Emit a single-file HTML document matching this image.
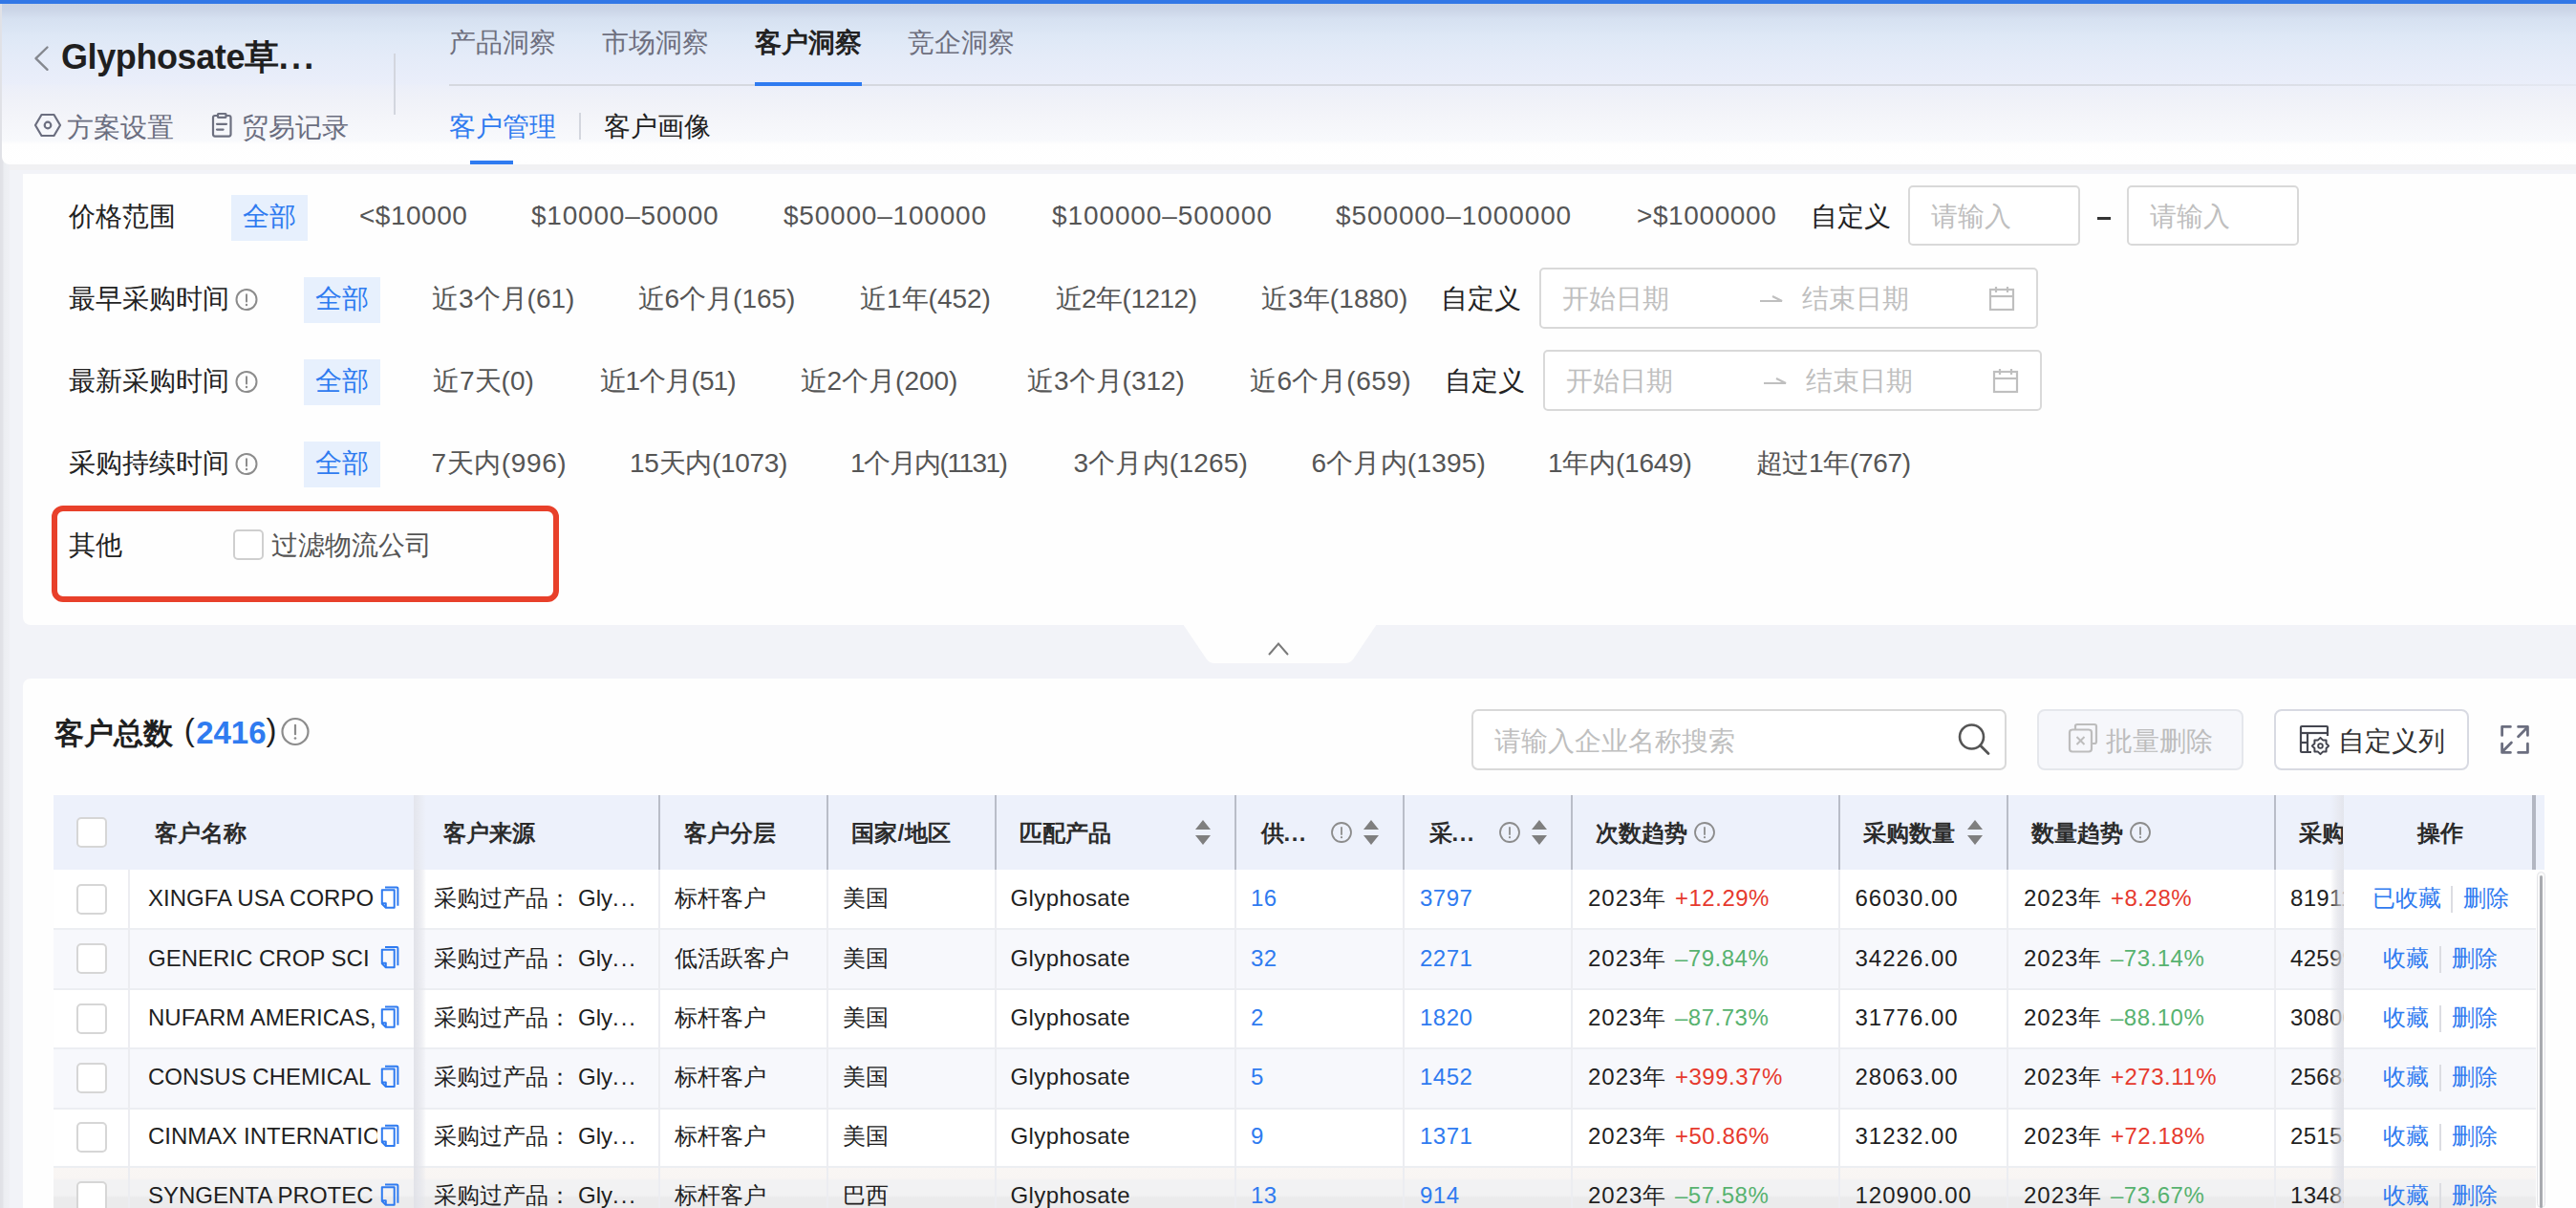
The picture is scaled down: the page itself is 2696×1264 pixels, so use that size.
<!DOCTYPE html><html><head><meta charset="utf-8"><style>
html,body{margin:0;padding:0;}
body{width:2696px;height:1264px;overflow:hidden;position:relative;background:#f2f3f8;font-family:"Liberation Sans",sans-serif;}
.t{position:absolute;line-height:40px;white-space:nowrap;}
.b{position:absolute;box-sizing:border-box;}
svg{position:absolute;overflow:visible;}
</style></head><body>
<div class="b" style="left:0px;top:0px;width:10px;height:1264px;background:linear-gradient(90deg,#e0e1e6 0px,#e2e3e8 3px,#eceef2 4px,#eff0f4 10px);"></div>
<div class="b" style="left:0px;top:0px;width:2696px;height:4px;background:#3277e6;"></div>
<div class="b" style="left:2px;top:4px;width:2694px;height:168px;background:linear-gradient(180deg,#c8d2e3 0px,#ccd6e8 7px,#d6e1f1 16px,#dee8f6 34px,#e4ebf8 54px,#eaeefa 84px,#eceff9 86px,#eff1f8 98px,#f3f4f9 116px,#f8f9fc 143px,#fefefe 147px,#ffffff 168px);border-bottom-left-radius:8px;"></div>
<div class="b" style="left:10px;top:172px;width:2686px;height:6px;background:#f1f1f3;"></div>
<svg style="left:0;top:0" width="100" height="100"><polyline points="49.5,49.5 37.5,61.2 49.5,72.8" fill="none" stroke="#85888f" stroke-width="2.4" stroke-linecap="round" stroke-linejoin="round"/></svg>
<div class="t" style="left:64px;top:40px;font-size:36px;color:#1f1f1f;font-weight:bold;letter-spacing:-0.4px;">Glyphosate草<span style="letter-spacing:3.3px">...</span></div>
<svg style="left:0;top:0" width="120" height="160"><polygon points="43.5,120 56.5,120 63,131 56.5,142 43.5,142 37,131" fill="none" stroke="#6b6e7f" stroke-width="2.2" stroke-linejoin="round"/><circle cx="50" cy="131" r="3.3" fill="none" stroke="#6b6e7f" stroke-width="2.2"/></svg>
<div class="t" style="left:70px;top:113.5px;font-size:28px;color:#6b6e80;">方案设置</div>
<svg style="left:0;top:0" width="300" height="160"><rect x="223" y="121" width="18.5" height="21.6" rx="2" fill="none" stroke="#6d7080" stroke-width="2.2"/><rect x="228" y="119" width="8.5" height="3.8" rx="0.5" fill="#f3f4f9" stroke="#6d7080" stroke-width="2.2"/><line x1="227" y1="129.8" x2="237" y2="129.8" stroke="#6d7080" stroke-width="2.2" stroke-linecap="round"/><line x1="227" y1="135.6" x2="233.6" y2="135.6" stroke="#6d7080" stroke-width="2.2" stroke-linecap="round"/></svg>
<div class="t" style="left:253px;top:113.5px;font-size:28px;color:#6b6e80;">贸易记录</div>
<div class="b" style="left:412px;top:56px;width:2px;height:64px;background:#d3d6de;"></div>
<div class="t" style="left:470px;top:24.7px;font-size:28px;color:#6e6f7e;">产品洞察</div>
<div class="t" style="left:630px;top:24.7px;font-size:28px;color:#6e6f7e;">市场洞察</div>
<div class="t" style="left:790px;top:24.7px;font-size:28px;color:#222222;font-weight:bold;">客户洞察</div>
<div class="t" style="left:950px;top:24.7px;font-size:28px;color:#6e6f7e;">竞企洞察</div>
<div class="b" style="left:470px;top:88px;width:2226px;height:2px;background:linear-gradient(90deg,#d5d8df 0px,#d5d8df 1700px,rgba(213,216,223,0.3) 2226px);"></div>
<div class="b" style="left:790px;top:86px;width:112px;height:4px;background:#2f7bf0;"></div>
<div class="t" style="left:470px;top:112.8px;font-size:28px;color:#2f7bf0;">客户管理</div>
<div class="b" style="left:606px;top:118px;width:2px;height:28px;background:#d3d6de;"></div>
<div class="t" style="left:632px;top:112.8px;font-size:28px;color:#1f1f1f;">客户画像</div>
<div class="b" style="left:492px;top:168px;width:45px;height:4px;background:#2f7bf0;"></div>
<div class="b" style="left:24px;top:182px;width:2672px;height:472px;background:#fefefe;border-radius:0 0 0 8px;"></div>
<div class="t" style="left:72px;top:206.75px;font-size:28px;color:#222222;">价格范围</div>
<div class="b" style="left:242px;top:204px;width:80px;height:48px;background:#e7f0fd;"></div>
<div class="t" style="left:254px;top:206.75px;font-size:28px;color:#2f7bf0;">全部</div>
<div class="t" style="left:376px;top:206.25px;font-size:28px;color:#555555;letter-spacing:0.5px;">&lt;$10000</div>
<div class="t" style="left:556px;top:206.25px;font-size:28px;color:#555555;letter-spacing:0.8px;">$10000–50000</div>
<div class="t" style="left:820px;top:206.25px;font-size:28px;color:#555555;letter-spacing:0.8px;">$50000–100000</div>
<div class="t" style="left:1101px;top:206.25px;font-size:28px;color:#555555;letter-spacing:0.9px;">$100000–500000</div>
<div class="t" style="left:1398px;top:206.25px;font-size:28px;color:#555555;letter-spacing:0.9px;">$500000–1000000</div>
<div class="t" style="left:1713px;top:206.25px;font-size:28px;color:#555555;letter-spacing:0.6px;">&gt;$1000000</div>
<div class="t" style="left:1894.5px;top:206.75px;font-size:28px;color:#222222;">自定义</div>
<div class="b" style="left:1997px;top:194px;width:180px;height:63px;border:2px solid #d9d9d9;border-radius:5px;background:#fff;"></div>
<div class="t" style="left:2021px;top:206.75px;font-size:28px;color:#bfbfbf;">请输入</div>
<div class="b" style="left:2195px;top:227px;width:14px;height:2.5px;background:#333;"></div>
<div class="b" style="left:2226px;top:194px;width:180px;height:63px;border:2px solid #d9d9d9;border-radius:5px;background:#fff;"></div>
<div class="t" style="left:2250px;top:206.75px;font-size:28px;color:#bfbfbf;">请输入</div>
<div class="t" style="left:72px;top:293.3px;font-size:28px;color:#222222;">最早采购时间</div>
<svg style="left:0;top:0" width="1" height="1"><circle cx="258" cy="313.5" r="10.5" fill="none" stroke="#8c8c8c" stroke-width="2"/><line x1="258" y1="308.25" x2="258" y2="315.6" stroke="#8c8c8c" stroke-width="2" stroke-linecap="round"/><circle cx="258" cy="318.96" r="1.2" fill="#8c8c8c"/></svg>
<div class="b" style="left:318px;top:290px;width:80px;height:48px;background:#e7f0fd;"></div>
<div class="t" style="left:330px;top:293.3px;font-size:28px;color:#2f7bf0;">全部</div>
<div class="t" style="left:452px;top:293.3px;font-size:28px;color:#555555;letter-spacing:0px;">近3个月(61)</div>
<div class="t" style="left:667.5px;top:293.3px;font-size:28px;color:#555555;letter-spacing:0px;">近6个月(165)</div>
<div class="t" style="left:900px;top:293.3px;font-size:28px;color:#555555;letter-spacing:0px;">近1年(452)</div>
<div class="t" style="left:1104.5px;top:293.3px;font-size:28px;color:#555555;letter-spacing:-0.5px;">近2年(1212)</div>
<div class="t" style="left:1320px;top:293.3px;font-size:28px;color:#555555;letter-spacing:0.1px;">近3年(1880)</div>
<div class="t" style="left:1507.5px;top:293.3px;font-size:28px;color:#222222;">自定义</div>
<div class="b" style="left:1611px;top:280px;width:522px;height:64px;border:2px solid #d9d9d9;border-radius:5px;background:#fff;"></div>
<div class="t" style="left:1635px;top:293.3px;font-size:28px;color:#bfbfbf;">开始日期</div>
<svg style="left:0;top:0" width="1" height="1"><polyline points="1842,315 1865,315 1855,310" fill="none" stroke="#bfbfbf" stroke-width="2.2" stroke-linejoin="miter"/></svg>
<div class="t" style="left:1886px;top:293.3px;font-size:28px;color:#bfbfbf;">结束日期</div>
<svg style="left:0;top:0" width="1" height="1"><rect x="2083" y="303" width="24" height="21" fill="none" stroke="#bfbfbf" stroke-width="2.2"/><line x1="2083" y1="310" x2="2107" y2="310" stroke="#bfbfbf" stroke-width="2.2"/><line x1="2089" y1="300" x2="2089" y2="306" stroke="#bfbfbf" stroke-width="2.2"/><line x1="2101" y1="300" x2="2101" y2="306" stroke="#bfbfbf" stroke-width="2.2"/></svg>
<div class="t" style="left:72px;top:379.3px;font-size:28px;color:#222222;">最新采购时间</div>
<svg style="left:0;top:0" width="1" height="1"><circle cx="258" cy="399.5" r="10.5" fill="none" stroke="#8c8c8c" stroke-width="2"/><line x1="258" y1="394.25" x2="258" y2="401.6" stroke="#8c8c8c" stroke-width="2" stroke-linecap="round"/><circle cx="258" cy="404.96" r="1.2" fill="#8c8c8c"/></svg>
<div class="b" style="left:318px;top:376px;width:80px;height:48px;background:#e7f0fd;"></div>
<div class="t" style="left:330px;top:379.3px;font-size:28px;color:#2f7bf0;">全部</div>
<div class="t" style="left:453px;top:379.3px;font-size:28px;color:#555555;letter-spacing:0px;">近7天(0)</div>
<div class="t" style="left:627.5px;top:379.3px;font-size:28px;color:#555555;letter-spacing:-0.9px;">近1个月(51)</div>
<div class="t" style="left:837.5px;top:379.3px;font-size:28px;color:#555555;letter-spacing:0px;">近2个月(200)</div>
<div class="t" style="left:1075px;top:379.3px;font-size:28px;color:#555555;letter-spacing:0px;">近3个月(312)</div>
<div class="t" style="left:1308px;top:379.3px;font-size:28px;color:#555555;letter-spacing:0.45px;">近6个月(659)</div>
<div class="t" style="left:1511.5px;top:379.3px;font-size:28px;color:#222222;">自定义</div>
<div class="b" style="left:1615px;top:366px;width:522px;height:64px;border:2px solid #d9d9d9;border-radius:5px;background:#fff;"></div>
<div class="t" style="left:1639px;top:379.3px;font-size:28px;color:#bfbfbf;">开始日期</div>
<svg style="left:0;top:0" width="1" height="1"><polyline points="1846,401 1869,401 1859,396" fill="none" stroke="#bfbfbf" stroke-width="2.2" stroke-linejoin="miter"/></svg>
<div class="t" style="left:1890px;top:379.3px;font-size:28px;color:#bfbfbf;">结束日期</div>
<svg style="left:0;top:0" width="1" height="1"><rect x="2087" y="389" width="24" height="21" fill="none" stroke="#bfbfbf" stroke-width="2.2"/><line x1="2087" y1="396" x2="2111" y2="396" stroke="#bfbfbf" stroke-width="2.2"/><line x1="2093" y1="386" x2="2093" y2="392" stroke="#bfbfbf" stroke-width="2.2"/><line x1="2105" y1="386" x2="2105" y2="392" stroke="#bfbfbf" stroke-width="2.2"/></svg>
<div class="t" style="left:72px;top:465.3px;font-size:28px;color:#222222;">采购持续时间</div>
<svg style="left:0;top:0" width="1" height="1"><circle cx="258" cy="485.5" r="10.5" fill="none" stroke="#8c8c8c" stroke-width="2"/><line x1="258" y1="480.25" x2="258" y2="487.6" stroke="#8c8c8c" stroke-width="2" stroke-linecap="round"/><circle cx="258" cy="490.96" r="1.2" fill="#8c8c8c"/></svg>
<div class="b" style="left:318px;top:462px;width:80px;height:48px;background:#e7f0fd;"></div>
<div class="t" style="left:330px;top:465.3px;font-size:28px;color:#2f7bf0;">全部</div>
<div class="t" style="left:451.5px;top:465.3px;font-size:28px;color:#555555;letter-spacing:0.6px;">7天内(996)</div>
<div class="t" style="left:659px;top:465.3px;font-size:28px;color:#555555;letter-spacing:-0.3px;">15天内(1073)</div>
<div class="t" style="left:890px;top:465.3px;font-size:28px;color:#555555;letter-spacing:-1.5px;">1个月内(1131)</div>
<div class="t" style="left:1123.5px;top:465.3px;font-size:28px;color:#555555;letter-spacing:0.2px;">3个月内(1265)</div>
<div class="t" style="left:1372.5px;top:465.3px;font-size:28px;color:#555555;letter-spacing:0.2px;">6个月内(1395)</div>
<div class="t" style="left:1620px;top:465.3px;font-size:28px;color:#555555;letter-spacing:-0.2px;">1年内(1649)</div>
<div class="t" style="left:1837.5px;top:465.3px;font-size:28px;color:#555555;letter-spacing:-0.3px;">超过1年(767)</div>
<div class="b" style="left:53.5px;top:528.5px;width:531px;height:101px;border:6px solid #e8402a;border-radius:12px;"></div>
<div class="t" style="left:72px;top:551.1px;font-size:28px;color:#222222;">其他</div>
<div class="b" style="left:244px;top:554px;width:32px;height:32px;border:2px solid #cfcfcf;border-radius:5px;background:#fff;"></div>
<div class="t" style="left:284px;top:551.1px;font-size:28px;color:#555555;">过滤物流公司</div>
<svg style="left:0;top:0" width="1" height="1"><path d="M1238,653 L1441,653 L1416,690 Q1413,694 1408,694 L1271,694 Q1266,694 1263,690 Z" fill="#fefefe"/><polyline points="1328.5,684.5 1338,673.5 1347.5,684.5" fill="none" stroke="#7a7a7a" stroke-width="2" stroke-linecap="round" stroke-linejoin="miter"/></svg>
<div class="b" style="left:24px;top:710px;width:2672px;height:600px;background:#fefefe;border-radius:8px 0 0 0;"></div>
<div class="t" style="left:57px;top:747px;font-size:31px;color:#1f1f1f;font-weight:bold;">客户总数 <span style="font-weight:normal;font-size:33px;margin-left:3px;position:relative;top:-3px">(</span><span style="color:#2f7bf0;margin-left:1.5px;font-size:33px">2416</span><span style="font-weight:normal;margin-left:0px;font-size:33px;position:relative;top:-3px">)</span></div>
<svg style="left:0;top:0" width="1" height="1"><circle cx="309" cy="765.5" r="13.5" fill="none" stroke="#8c8c8c" stroke-width="2.2"/><line x1="309" y1="758.75" x2="309" y2="768.2" stroke="#8c8c8c" stroke-width="2.2" stroke-linecap="round"/><circle cx="309" cy="772.52" r="1.32" fill="#8c8c8c"/></svg>
<div class="b" style="left:1540px;top:742px;width:560px;height:64px;border:2px solid #d9d9d9;border-radius:7px;background:#fff;"></div>
<div class="t" style="left:1564px;top:756px;font-size:28px;color:#bfbfbf;">请输入企业名称搜索</div>
<svg style="left:0;top:0" width="1" height="1"><circle cx="2063.5" cy="771" r="12.5" fill="none" stroke="#555" stroke-width="2.6"/><line x1="2072.5" y1="780" x2="2081" y2="788.5" stroke="#555" stroke-width="2.8" stroke-linecap="round"/></svg>
<div class="b" style="left:2132px;top:742px;width:216px;height:64px;border:2px solid #e5e7ec;border-radius:8px;background:#f6f7fb;"></div>
<svg style="left:0;top:0" width="1" height="1"><rect x="2166" y="763.5" width="23" height="23" rx="3" fill="none" stroke="#bdbdbd" stroke-width="2.2"/><path d="M2172,763.5 L2172,759.5 Q2172,758 2174,758 L2192,758 Q2194,758 2194,760 L2194,776 Q2194,778 2192,778 L2189,778" fill="none" stroke="#bdbdbd" stroke-width="2.2"/><line x1="2173.5" y1="771" x2="2181.5" y2="779" stroke="#bdbdbd" stroke-width="2"/><line x1="2181.5" y1="771" x2="2173.5" y2="779" stroke="#bdbdbd" stroke-width="2"/></svg>
<div class="t" style="left:2204px;top:756px;font-size:28px;color:#bdbdbd;">批量删除</div>
<div class="b" style="left:2380px;top:742px;width:204px;height:64px;border:2px solid #d8dae2;border-radius:8px;background:#fff;"></div>
<svg style="left:0;top:0" width="1" height="1"><path d="M2419,787 L2409,787 Q2408,787 2408,786 L2408,761 Q2408,760 2409,760 L2435,760 Q2436,760 2436,761 L2436,770" fill="none" stroke="#444650" stroke-width="2.2"/><line x1="2409" y1="767" x2="2436" y2="767" stroke="#444650" stroke-width="2.2"/><line x1="2415" y1="767" x2="2415" y2="787" stroke="#444650" stroke-width="2.2"/><line x1="2409" y1="777" x2="2415" y2="777" stroke="#444650" stroke-width="2.2"/><polygon points="2428.50,771.90 2431.03,774.40 2434.58,774.42 2434.60,777.97 2437.10,780.50 2434.60,783.03 2434.58,786.58 2431.03,786.60 2428.50,789.10 2425.97,786.60 2422.42,786.58 2422.40,783.03 2419.90,780.50 2422.40,777.97 2422.42,774.42 2425.97,774.40" fill="#fff" stroke="#444650" stroke-width="2" stroke-linejoin="round"/><circle cx="2428.5" cy="780.5" r="2.4" fill="none" stroke="#444650" stroke-width="1.8"/></svg>
<div class="t" style="left:2447px;top:756px;font-size:28px;color:#333333;">自定义列</div>
<svg style="left:0;top:0" width="1" height="1"><g fill="none" stroke="#6b6e7f" stroke-width="2.8" stroke-linecap="round" stroke-linejoin="round"><polyline points="2618.6,769.4 2618.6,760.4 2627.4,760.4"/><polyline points="2635.6,760.4 2645.4,760.4 2645.4,769.4"/><polyline points="2618.6,778.2 2618.6,787.4 2627.4,787.4"/><polyline points="2635.6,787.4 2645.4,787.4 2645.4,778.2"/><line x1="2635.6" y1="770.8" x2="2644.2" y2="762"/><line x1="2628.4" y1="777" x2="2620" y2="785.6"/></g></svg>
<div class="b" style="left:56px;top:832px;width:2607px;height:78px;background:#edf1fb;"></div>
<div class="b" style="left:56px;top:910px;width:2598px;height:62px;background:#ffffff;"></div>
<div class="b" style="left:56px;top:972px;width:2598px;height:63px;background:#f7f8fc;"></div>
<div class="b" style="left:56px;top:971px;width:2598px;height:2px;background:#eceef2;"></div>
<div class="b" style="left:56px;top:1035px;width:2598px;height:62px;background:#ffffff;"></div>
<div class="b" style="left:56px;top:1034px;width:2598px;height:2px;background:#eceef2;"></div>
<div class="b" style="left:56px;top:1097px;width:2598px;height:62.5px;background:#f7f8fc;"></div>
<div class="b" style="left:56px;top:1096px;width:2598px;height:2px;background:#eceef2;"></div>
<div class="b" style="left:56px;top:1159.5px;width:2598px;height:61.5px;background:#ffffff;"></div>
<div class="b" style="left:56px;top:1158.5px;width:2598px;height:2px;background:#eceef2;"></div>
<div class="b" style="left:56px;top:1221px;width:2598px;height:62px;background:linear-gradient(180deg,#f9f6f4 0px,#f8f5f3 12px,#f2f2f3 14px,#f2f2f3 30px,#ebebec 32px);"></div>
<div class="b" style="left:56px;top:1220px;width:2598px;height:2px;background:#eceef2;"></div>
<div class="b" style="left:689px;top:832px;width:2px;height:78px;background:#b9bdc8;"></div>
<div class="b" style="left:865px;top:832px;width:2px;height:78px;background:#b9bdc8;"></div>
<div class="b" style="left:1041px;top:832px;width:2px;height:78px;background:#b9bdc8;"></div>
<div class="b" style="left:1292px;top:832px;width:2px;height:78px;background:#b9bdc8;"></div>
<div class="b" style="left:1468px;top:832px;width:2px;height:78px;background:#b9bdc8;"></div>
<div class="b" style="left:1644px;top:832px;width:2px;height:78px;background:#b9bdc8;"></div>
<div class="b" style="left:1924px;top:832px;width:2px;height:78px;background:#b9bdc8;"></div>
<div class="b" style="left:2100px;top:832px;width:2px;height:78px;background:#b9bdc8;"></div>
<div class="b" style="left:2380px;top:832px;width:2px;height:78px;background:#b9bdc8;"></div>
<div class="b" style="left:2650px;top:832px;width:4px;height:78px;background:#b3b7c2;"></div>
<div class="b" style="left:134px;top:910px;width:2px;height:354px;background:#ecedf1;"></div>
<div class="b" style="left:689px;top:910px;width:2px;height:354px;background:#ecedf1;"></div>
<div class="b" style="left:865px;top:910px;width:2px;height:354px;background:#ecedf1;"></div>
<div class="b" style="left:1041px;top:910px;width:2px;height:354px;background:#ecedf1;"></div>
<div class="b" style="left:1292px;top:910px;width:2px;height:354px;background:#ecedf1;"></div>
<div class="b" style="left:1468px;top:910px;width:2px;height:354px;background:#ecedf1;"></div>
<div class="b" style="left:1644px;top:910px;width:2px;height:354px;background:#ecedf1;"></div>
<div class="b" style="left:1924px;top:910px;width:2px;height:354px;background:#ecedf1;"></div>
<div class="b" style="left:2100px;top:910px;width:2px;height:354px;background:#ecedf1;"></div>
<div class="b" style="left:2380px;top:910px;width:2px;height:354px;background:#ecedf1;"></div>
<div class="b" style="left:433px;top:832px;width:13px;height:432px;background:linear-gradient(90deg,rgba(224,225,231,0.75) 0px,rgba(228,229,235,0.6) 5px,rgba(240,241,245,0) 13px);"></div>
<div class="b" style="left:2452px;top:832px;width:202px;height:432px;background:transparent;"></div>
<div class="b" style="left:2439px;top:832px;width:14px;height:432px;background:linear-gradient(270deg,rgba(224,225,231,0.75) 0px,rgba(228,229,235,0.55) 6px,rgba(240,241,245,0) 14px);"></div>
<div class="b" style="left:2655px;top:912px;width:9px;height:352px;border:1.5px solid #e3e4e8;border-radius:5px;background:#fafafa;"></div>
<div class="b" style="left:2657.5px;top:916px;width:3px;height:348px;background:#a9abb0;border-radius:2px;"></div>
<div class="b" style="left:80px;top:855px;width:32px;height:32px;border:2px solid #d6d6d6;border-radius:5px;background:#fff;"></div>
<div class="t" style="left:161.5px;top:852px;font-size:24px;color:#2b2b2b;font-weight:bold;">客户名称</div>
<div class="t" style="left:463.5px;top:852px;font-size:24px;color:#2b2b2b;font-weight:bold;">客户来源</div>
<div class="t" style="left:715.5px;top:852px;font-size:24px;color:#2b2b2b;font-weight:bold;">客户分层</div>
<div class="t" style="left:890.5px;top:852px;font-size:24px;color:#2b2b2b;font-weight:bold;letter-spacing:0.5px;">国家/地区</div>
<div class="t" style="left:1067px;top:852px;font-size:24px;color:#2b2b2b;font-weight:bold;">匹配产品</div>
<div class="t" style="left:1319.5px;top:852px;font-size:24px;color:#2b2b2b;font-weight:bold;">供<span style="letter-spacing:1.5px">...</span></div>
<div class="t" style="left:1495.5px;top:852px;font-size:24px;color:#2b2b2b;font-weight:bold;">采<span style="letter-spacing:1.5px">...</span></div>
<div class="t" style="left:1669.5px;top:852px;font-size:24px;color:#2b2b2b;font-weight:bold;">次数趋势</div>
<div class="t" style="left:1950px;top:852px;font-size:24px;color:#2b2b2b;font-weight:bold;">采购数量</div>
<div class="t" style="left:2125.5px;top:852px;font-size:24px;color:#2b2b2b;font-weight:bold;">数量趋势</div>
<div class="t" style="left:2406px;top:852px;font-size:24px;color:#2b2b2b;font-weight:bold;width:46px;overflow:hidden;">采购</div>
<div class="t" style="left:2529.5px;top:852px;font-size:24px;color:#2b2b2b;font-weight:bold;">操作</div>
<svg style="left:0;top:0" width="1" height="1"><path d="M1251,868 L1267,868 L1259,858 Z M1251,874 L1267,874 L1259,884 Z" fill="#7f7f7f"/></svg>
<svg style="left:0;top:0" width="1" height="1"><path d="M1427,868 L1443,868 L1435,858 Z M1427,874 L1443,874 L1435,884 Z" fill="#7f7f7f"/></svg>
<svg style="left:0;top:0" width="1" height="1"><path d="M1603,868 L1619,868 L1611,858 Z M1603,874 L1619,874 L1611,884 Z" fill="#7f7f7f"/></svg>
<svg style="left:0;top:0" width="1" height="1"><path d="M2059,868 L2075,868 L2067,858 Z M2059,874 L2075,874 L2067,884 Z" fill="#7f7f7f"/></svg>
<svg style="left:0;top:0" width="1" height="1"><circle cx="1404" cy="871" r="10" fill="none" stroke="#8c8c8c" stroke-width="1.8"/><line x1="1404" y1="866.0" x2="1404" y2="873.0" stroke="#8c8c8c" stroke-width="1.8" stroke-linecap="round"/><circle cx="1404" cy="876.2" r="1.08" fill="#8c8c8c"/></svg>
<svg style="left:0;top:0" width="1" height="1"><circle cx="1580" cy="871" r="10" fill="none" stroke="#8c8c8c" stroke-width="1.8"/><line x1="1580" y1="866.0" x2="1580" y2="873.0" stroke="#8c8c8c" stroke-width="1.8" stroke-linecap="round"/><circle cx="1580" cy="876.2" r="1.08" fill="#8c8c8c"/></svg>
<svg style="left:0;top:0" width="1" height="1"><circle cx="1784" cy="871" r="10" fill="none" stroke="#8c8c8c" stroke-width="1.8"/><line x1="1784" y1="866.0" x2="1784" y2="873.0" stroke="#8c8c8c" stroke-width="1.8" stroke-linecap="round"/><circle cx="1784" cy="876.2" r="1.08" fill="#8c8c8c"/></svg>
<svg style="left:0;top:0" width="1" height="1"><circle cx="2240" cy="871" r="10" fill="none" stroke="#8c8c8c" stroke-width="1.8"/><line x1="2240" y1="866.0" x2="2240" y2="873.0" stroke="#8c8c8c" stroke-width="1.8" stroke-linecap="round"/><circle cx="2240" cy="876.2" r="1.08" fill="#8c8c8c"/></svg>
<div class="b" style="left:80px;top:924.5px;width:32px;height:32px;border:2px solid #d6d6d6;border-radius:5px;background:#fff;"></div>
<div class="t" style="left:155px;top:920.0px;font-size:24px;color:#1f1f1f;width:240px;overflow:hidden;">XINGFA USA CORPO</div>
<svg style="left:0;top:0" width="1" height="1"><g fill="none" stroke="#2f7bf0" stroke-width="2" stroke-linejoin="round"><path d="M399.8,931.3 L412.7,931.3 L412.7,949.8 L403.8,949.8 L399.8,945.8 Z"/><polyline points="399.8,945.3 403.8,945.3 403.8,949.8"/><path d="M403,928.4 L415.3,928.4 Q416.4,928.4 416.4,929.5 L416.4,947.7" stroke-linecap="butt"/></g></svg>
<div class="t" style="left:454px;top:920.0px;font-size:24px;color:#1f1f1f;">采购过产品：</div>
<div class="t" style="left:605px;top:920.0px;font-size:24px;color:#1f1f1f;">Gly<span style="letter-spacing:2px">...</span></div>
<div class="t" style="left:706px;top:920.0px;font-size:24px;color:#1f1f1f;">标杆客户</div>
<div class="t" style="left:882px;top:920.0px;font-size:24px;color:#1f1f1f;">美国</div>
<div class="t" style="left:1057.5px;top:920.0px;font-size:24px;color:#1f1f1f;letter-spacing:0.4px;">Glyphosate</div>
<div class="t" style="left:1309px;top:920.0px;font-size:24px;color:#2f7bf0;letter-spacing:0.5px;">16</div>
<div class="t" style="left:1486px;top:920.0px;font-size:24px;color:#2f7bf0;letter-spacing:0.5px;">3797</div>
<div class="t" style="left:1662px;top:920.0px;font-size:24px;color:#1f1f1f;letter-spacing:1.0px;">2023年</div>
<div class="t" style="left:1753px;top:920.0px;font-size:24px;color:#e63a2e;letter-spacing:0.5px;">+12.29%</div>
<div class="t" style="left:1941.5px;top:920.0px;font-size:24px;color:#1f1f1f;letter-spacing:1px;">66030.00</div>
<div class="t" style="left:2118px;top:920.0px;font-size:24px;color:#1f1f1f;letter-spacing:1.0px;">2023年</div>
<div class="t" style="left:2209px;top:920.0px;font-size:24px;color:#e63a2e;letter-spacing:0.5px;">+8.28%</div>
<div class="t" style="left:2397px;top:920.0px;font-size:24px;color:#1f1f1f;letter-spacing:0.3px;width:56px;overflow:hidden;">81911</div>
<div class="t" style="left:2482.5px;top:920.0px;font-size:24px;color:#2f7bf0;">已收藏</div>
<div class="b" style="left:2565px;top:927.0px;width:2px;height:28px;background:#dcdde2;"></div>
<div class="t" style="left:2577.5px;top:920.0px;font-size:24px;color:#2f7bf0;">删除</div>
<div class="b" style="left:80px;top:987.0px;width:32px;height:32px;border:2px solid #d6d6d6;border-radius:5px;background:#fff;"></div>
<div class="t" style="left:155px;top:982.5px;font-size:24px;color:#1f1f1f;width:240px;overflow:hidden;">GENERIC CROP SCI</div>
<svg style="left:0;top:0" width="1" height="1"><g fill="none" stroke="#2f7bf0" stroke-width="2" stroke-linejoin="round"><path d="M399.8,993.8 L412.7,993.8 L412.7,1012.3 L403.8,1012.3 L399.8,1008.3 Z"/><polyline points="399.8,1007.8 403.8,1007.8 403.8,1012.3"/><path d="M403,990.9 L415.3,990.9 Q416.4,990.9 416.4,992.0 L416.4,1010.2" stroke-linecap="butt"/></g></svg>
<div class="t" style="left:454px;top:982.5px;font-size:24px;color:#1f1f1f;">采购过产品：</div>
<div class="t" style="left:605px;top:982.5px;font-size:24px;color:#1f1f1f;">Gly<span style="letter-spacing:2px">...</span></div>
<div class="t" style="left:706px;top:982.5px;font-size:24px;color:#1f1f1f;">低活跃客户</div>
<div class="t" style="left:882px;top:982.5px;font-size:24px;color:#1f1f1f;">美国</div>
<div class="t" style="left:1057.5px;top:982.5px;font-size:24px;color:#1f1f1f;letter-spacing:0.4px;">Glyphosate</div>
<div class="t" style="left:1309px;top:982.5px;font-size:24px;color:#2f7bf0;letter-spacing:0.5px;">32</div>
<div class="t" style="left:1486px;top:982.5px;font-size:24px;color:#2f7bf0;letter-spacing:0.5px;">2271</div>
<div class="t" style="left:1662px;top:982.5px;font-size:24px;color:#1f1f1f;letter-spacing:1.0px;">2023年</div>
<div class="t" style="left:1753px;top:982.5px;font-size:24px;color:#57b26f;letter-spacing:0.5px;">–79.84%</div>
<div class="t" style="left:1941.5px;top:982.5px;font-size:24px;color:#1f1f1f;letter-spacing:1px;">34226.00</div>
<div class="t" style="left:2118px;top:982.5px;font-size:24px;color:#1f1f1f;letter-spacing:1.0px;">2023年</div>
<div class="t" style="left:2209px;top:982.5px;font-size:24px;color:#57b26f;letter-spacing:0.5px;">–73.14%</div>
<div class="t" style="left:2397px;top:982.5px;font-size:24px;color:#1f1f1f;letter-spacing:0.3px;width:56px;overflow:hidden;">42599</div>
<div class="t" style="left:2494px;top:982.5px;font-size:24px;color:#2f7bf0;">收藏</div>
<div class="b" style="left:2553px;top:989.5px;width:2px;height:28px;background:#dcdde2;"></div>
<div class="t" style="left:2566px;top:982.5px;font-size:24px;color:#2f7bf0;">删除</div>
<div class="b" style="left:80px;top:1049.5px;width:32px;height:32px;border:2px solid #d6d6d6;border-radius:5px;background:#fff;"></div>
<div class="t" style="left:155px;top:1045.0px;font-size:24px;color:#1f1f1f;width:240px;overflow:hidden;">NUFARM AMERICAS,</div>
<svg style="left:0;top:0" width="1" height="1"><g fill="none" stroke="#2f7bf0" stroke-width="2" stroke-linejoin="round"><path d="M399.8,1056.3 L412.7,1056.3 L412.7,1074.8 L403.8,1074.8 L399.8,1070.8 Z"/><polyline points="399.8,1070.3 403.8,1070.3 403.8,1074.8"/><path d="M403,1053.4 L415.3,1053.4 Q416.4,1053.4 416.4,1054.5 L416.4,1072.7" stroke-linecap="butt"/></g></svg>
<div class="t" style="left:454px;top:1045.0px;font-size:24px;color:#1f1f1f;">采购过产品：</div>
<div class="t" style="left:605px;top:1045.0px;font-size:24px;color:#1f1f1f;">Gly<span style="letter-spacing:2px">...</span></div>
<div class="t" style="left:706px;top:1045.0px;font-size:24px;color:#1f1f1f;">标杆客户</div>
<div class="t" style="left:882px;top:1045.0px;font-size:24px;color:#1f1f1f;">美国</div>
<div class="t" style="left:1057.5px;top:1045.0px;font-size:24px;color:#1f1f1f;letter-spacing:0.4px;">Glyphosate</div>
<div class="t" style="left:1309px;top:1045.0px;font-size:24px;color:#2f7bf0;letter-spacing:0.5px;">2</div>
<div class="t" style="left:1486px;top:1045.0px;font-size:24px;color:#2f7bf0;letter-spacing:0.5px;">1820</div>
<div class="t" style="left:1662px;top:1045.0px;font-size:24px;color:#1f1f1f;letter-spacing:1.0px;">2023年</div>
<div class="t" style="left:1753px;top:1045.0px;font-size:24px;color:#57b26f;letter-spacing:0.5px;">–87.73%</div>
<div class="t" style="left:1941.5px;top:1045.0px;font-size:24px;color:#1f1f1f;letter-spacing:1px;">31776.00</div>
<div class="t" style="left:2118px;top:1045.0px;font-size:24px;color:#1f1f1f;letter-spacing:1.0px;">2023年</div>
<div class="t" style="left:2209px;top:1045.0px;font-size:24px;color:#57b26f;letter-spacing:0.5px;">–88.10%</div>
<div class="t" style="left:2397px;top:1045.0px;font-size:24px;color:#1f1f1f;letter-spacing:0.3px;width:56px;overflow:hidden;">30800</div>
<div class="t" style="left:2494px;top:1045.0px;font-size:24px;color:#2f7bf0;">收藏</div>
<div class="b" style="left:2553px;top:1052.0px;width:2px;height:28px;background:#dcdde2;"></div>
<div class="t" style="left:2566px;top:1045.0px;font-size:24px;color:#2f7bf0;">删除</div>
<div class="b" style="left:80px;top:1111.75px;width:32px;height:32px;border:2px solid #d6d6d6;border-radius:5px;background:#fff;"></div>
<div class="t" style="left:155px;top:1107.25px;font-size:24px;color:#1f1f1f;width:240px;overflow:hidden;">CONSUS CHEMICAL</div>
<svg style="left:0;top:0" width="1" height="1"><g fill="none" stroke="#2f7bf0" stroke-width="2" stroke-linejoin="round"><path d="M399.8,1118.55 L412.7,1118.55 L412.7,1137.05 L403.8,1137.05 L399.8,1133.05 Z"/><polyline points="399.8,1132.55 403.8,1132.55 403.8,1137.05"/><path d="M403,1115.65 L415.3,1115.65 Q416.4,1115.65 416.4,1116.75 L416.4,1134.95" stroke-linecap="butt"/></g></svg>
<div class="t" style="left:454px;top:1107.25px;font-size:24px;color:#1f1f1f;">采购过产品：</div>
<div class="t" style="left:605px;top:1107.25px;font-size:24px;color:#1f1f1f;">Gly<span style="letter-spacing:2px">...</span></div>
<div class="t" style="left:706px;top:1107.25px;font-size:24px;color:#1f1f1f;">标杆客户</div>
<div class="t" style="left:882px;top:1107.25px;font-size:24px;color:#1f1f1f;">美国</div>
<div class="t" style="left:1057.5px;top:1107.25px;font-size:24px;color:#1f1f1f;letter-spacing:0.4px;">Glyphosate</div>
<div class="t" style="left:1309px;top:1107.25px;font-size:24px;color:#2f7bf0;letter-spacing:0.5px;">5</div>
<div class="t" style="left:1486px;top:1107.25px;font-size:24px;color:#2f7bf0;letter-spacing:0.5px;">1452</div>
<div class="t" style="left:1662px;top:1107.25px;font-size:24px;color:#1f1f1f;letter-spacing:1.0px;">2023年</div>
<div class="t" style="left:1753px;top:1107.25px;font-size:24px;color:#e63a2e;letter-spacing:0.5px;">+399.37%</div>
<div class="t" style="left:1941.5px;top:1107.25px;font-size:24px;color:#1f1f1f;letter-spacing:1px;">28063.00</div>
<div class="t" style="left:2118px;top:1107.25px;font-size:24px;color:#1f1f1f;letter-spacing:1.0px;">2023年</div>
<div class="t" style="left:2209px;top:1107.25px;font-size:24px;color:#e63a2e;letter-spacing:0.5px;">+273.11%</div>
<div class="t" style="left:2397px;top:1107.25px;font-size:24px;color:#1f1f1f;letter-spacing:0.3px;width:56px;overflow:hidden;">25688</div>
<div class="t" style="left:2494px;top:1107.25px;font-size:24px;color:#2f7bf0;">收藏</div>
<div class="b" style="left:2553px;top:1114.25px;width:2px;height:28px;background:#dcdde2;"></div>
<div class="t" style="left:2566px;top:1107.25px;font-size:24px;color:#2f7bf0;">删除</div>
<div class="b" style="left:80px;top:1173.75px;width:32px;height:32px;border:2px solid #d6d6d6;border-radius:5px;background:#fff;"></div>
<div class="t" style="left:155px;top:1169.25px;font-size:24px;color:#1f1f1f;width:240px;overflow:hidden;">CINMAX INTERNATIO</div>
<svg style="left:0;top:0" width="1" height="1"><g fill="none" stroke="#2f7bf0" stroke-width="2" stroke-linejoin="round"><path d="M399.8,1180.55 L412.7,1180.55 L412.7,1199.05 L403.8,1199.05 L399.8,1195.05 Z"/><polyline points="399.8,1194.55 403.8,1194.55 403.8,1199.05"/><path d="M403,1177.65 L415.3,1177.65 Q416.4,1177.65 416.4,1178.75 L416.4,1196.95" stroke-linecap="butt"/></g></svg>
<div class="t" style="left:454px;top:1169.25px;font-size:24px;color:#1f1f1f;">采购过产品：</div>
<div class="t" style="left:605px;top:1169.25px;font-size:24px;color:#1f1f1f;">Gly<span style="letter-spacing:2px">...</span></div>
<div class="t" style="left:706px;top:1169.25px;font-size:24px;color:#1f1f1f;">标杆客户</div>
<div class="t" style="left:882px;top:1169.25px;font-size:24px;color:#1f1f1f;">美国</div>
<div class="t" style="left:1057.5px;top:1169.25px;font-size:24px;color:#1f1f1f;letter-spacing:0.4px;">Glyphosate</div>
<div class="t" style="left:1309px;top:1169.25px;font-size:24px;color:#2f7bf0;letter-spacing:0.5px;">9</div>
<div class="t" style="left:1486px;top:1169.25px;font-size:24px;color:#2f7bf0;letter-spacing:0.5px;">1371</div>
<div class="t" style="left:1662px;top:1169.25px;font-size:24px;color:#1f1f1f;letter-spacing:1.0px;">2023年</div>
<div class="t" style="left:1753px;top:1169.25px;font-size:24px;color:#e63a2e;letter-spacing:0.5px;">+50.86%</div>
<div class="t" style="left:1941.5px;top:1169.25px;font-size:24px;color:#1f1f1f;letter-spacing:1px;">31232.00</div>
<div class="t" style="left:2118px;top:1169.25px;font-size:24px;color:#1f1f1f;letter-spacing:1.0px;">2023年</div>
<div class="t" style="left:2209px;top:1169.25px;font-size:24px;color:#e63a2e;letter-spacing:0.5px;">+72.18%</div>
<div class="t" style="left:2397px;top:1169.25px;font-size:24px;color:#1f1f1f;letter-spacing:0.3px;width:56px;overflow:hidden;">25155</div>
<div class="t" style="left:2494px;top:1169.25px;font-size:24px;color:#2f7bf0;">收藏</div>
<div class="b" style="left:2553px;top:1176.25px;width:2px;height:28px;background:#dcdde2;"></div>
<div class="t" style="left:2566px;top:1169.25px;font-size:24px;color:#2f7bf0;">删除</div>
<div class="b" style="left:80px;top:1235.5px;width:32px;height:32px;border:2px solid #d6d6d6;border-radius:5px;background:#fff;"></div>
<div class="t" style="left:155px;top:1231.0px;font-size:24px;color:#1f1f1f;width:240px;overflow:hidden;">SYNGENTA PROTEC</div>
<svg style="left:0;top:0" width="1" height="1"><g fill="none" stroke="#2f7bf0" stroke-width="2" stroke-linejoin="round"><path d="M399.8,1242.3 L412.7,1242.3 L412.7,1260.8 L403.8,1260.8 L399.8,1256.8 Z"/><polyline points="399.8,1256.3 403.8,1256.3 403.8,1260.8"/><path d="M403,1239.4 L415.3,1239.4 Q416.4,1239.4 416.4,1240.5 L416.4,1258.7" stroke-linecap="butt"/></g></svg>
<div class="t" style="left:454px;top:1231.0px;font-size:24px;color:#1f1f1f;">采购过产品：</div>
<div class="t" style="left:605px;top:1231.0px;font-size:24px;color:#1f1f1f;">Gly<span style="letter-spacing:2px">...</span></div>
<div class="t" style="left:706px;top:1231.0px;font-size:24px;color:#1f1f1f;">标杆客户</div>
<div class="t" style="left:882px;top:1231.0px;font-size:24px;color:#1f1f1f;">巴西</div>
<div class="t" style="left:1057.5px;top:1231.0px;font-size:24px;color:#1f1f1f;letter-spacing:0.4px;">Glyphosate</div>
<div class="t" style="left:1309px;top:1231.0px;font-size:24px;color:#2f7bf0;letter-spacing:0.5px;">13</div>
<div class="t" style="left:1486px;top:1231.0px;font-size:24px;color:#2f7bf0;letter-spacing:0.5px;">914</div>
<div class="t" style="left:1662px;top:1231.0px;font-size:24px;color:#1f1f1f;letter-spacing:1.0px;">2023年</div>
<div class="t" style="left:1753px;top:1231.0px;font-size:24px;color:#57b26f;letter-spacing:0.5px;">–57.58%</div>
<div class="t" style="left:1941.5px;top:1231.0px;font-size:24px;color:#1f1f1f;letter-spacing:1px;">120900.00</div>
<div class="t" style="left:2118px;top:1231.0px;font-size:24px;color:#1f1f1f;letter-spacing:1.0px;">2023年</div>
<div class="t" style="left:2209px;top:1231.0px;font-size:24px;color:#57b26f;letter-spacing:0.5px;">–73.67%</div>
<div class="t" style="left:2397px;top:1231.0px;font-size:24px;color:#1f1f1f;letter-spacing:0.3px;width:56px;overflow:hidden;">13482</div>
<div class="t" style="left:2494px;top:1231.0px;font-size:24px;color:#2f7bf0;">收藏</div>
<div class="b" style="left:2553px;top:1238.0px;width:2px;height:28px;background:#dcdde2;"></div>
<div class="t" style="left:2566px;top:1231.0px;font-size:24px;color:#2f7bf0;">删除</div>
<div class="b" style="left:433px;top:910px;width:13px;height:354px;background:linear-gradient(90deg,rgba(224,225,231,0.75) 0px,rgba(228,229,235,0.6) 5px,rgba(240,241,245,0) 13px);"></div>
<div class="b" style="left:2439px;top:910px;width:14px;height:354px;background:linear-gradient(270deg,rgba(224,225,231,0.75) 0px,rgba(228,229,235,0.55) 6px,rgba(240,241,245,0) 14px);"></div>
</body></html>
